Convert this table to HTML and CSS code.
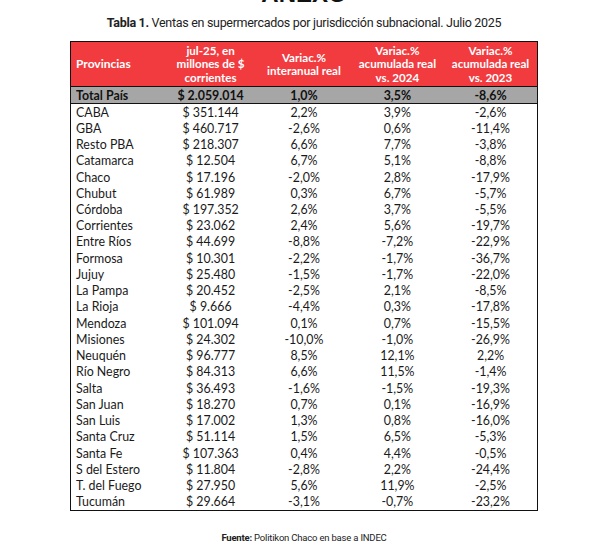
FILE: index.html
```html
<!DOCTYPE html>
<html lang="es">
<head>
<meta charset="utf-8">
<title>Anexo</title>
<link rel="stylesheet" href="styles.css">
</head>
<body>
<div class="page">
  <h1 class="anexo">ANEXO</h1>
  <p class="caption"><b>Tabla 1.</b> Ventas en supermercados por jurisdicción subnacional. Julio 2025</p>
  <table class="data">
    <colgroup><col><col><col><col><col></colgroup>
    <thead>
      <tr>
        <th class="left">Provincias</th>
        <th>jul-25, en<br>millones de $<br>corrientes</th>
        <th>Variac.%<br>interanual real</th>
        <th>Variac.%<br>acumulada real<br>vs. 2024</th>
        <th>Variac.%<br>acumulada real<br>vs. 2023</th>
      </tr>
    </thead>
    <tbody>
      <tr class="total"><td class="left">Total País</td><td>$ 2.059.014</td><td>1,0%</td><td>3,5%</td><td>-8,6%</td></tr>
      <tr><td class="left">CABA</td><td>$ 351.144</td><td>2,2%</td><td>3,9%</td><td>-2,6%</td></tr>
      <tr><td class="left">GBA</td><td>$ 460.717</td><td>-2,6%</td><td>0,6%</td><td>-11,4%</td></tr>
      <tr><td class="left">Resto PBA</td><td>$ 218.307</td><td>6,6%</td><td>7,7%</td><td>-3,8%</td></tr>
      <tr><td class="left">Catamarca</td><td>$ 12.504</td><td>6,7%</td><td>5,1%</td><td>-8,8%</td></tr>
      <tr><td class="left">Chaco</td><td>$ 17.196</td><td>-2,0%</td><td>2,8%</td><td>-17,9%</td></tr>
      <tr><td class="left">Chubut</td><td>$ 61.989</td><td>0,3%</td><td>6,7%</td><td>-5,7%</td></tr>
      <tr><td class="left">Córdoba</td><td>$ 197.352</td><td>2,6%</td><td>3,7%</td><td>-5,5%</td></tr>
      <tr><td class="left">Corrientes</td><td>$ 23.062</td><td>2,4%</td><td>5,6%</td><td>-19,7%</td></tr>
      <tr><td class="left">Entre Ríos</td><td>$ 44.699</td><td>-8,8%</td><td>-7,2%</td><td>-22,9%</td></tr>
      <tr><td class="left">Formosa</td><td>$ 10.301</td><td>-2,2%</td><td>-1,7%</td><td>-36,7%</td></tr>
      <tr><td class="left">Jujuy</td><td>$ 25.480</td><td>-1,5%</td><td>-1,7%</td><td>-22,0%</td></tr>
      <tr><td class="left">La Pampa</td><td>$ 20.452</td><td>-2,5%</td><td>2,1%</td><td>-8,5%</td></tr>
      <tr><td class="left">La Rioja</td><td>$ 9.666</td><td>-4,4%</td><td>0,3%</td><td>-17,8%</td></tr>
      <tr><td class="left">Mendoza</td><td>$ 101.094</td><td>0,1%</td><td>0,7%</td><td>-15,5%</td></tr>
      <tr><td class="left">Misiones</td><td>$ 24.302</td><td>-10,0%</td><td>-1,0%</td><td>-26,9%</td></tr>
      <tr><td class="left">Neuquén</td><td>$ 96.777</td><td>8,5%</td><td>12,1%</td><td>2,2%</td></tr>
      <tr><td class="left">Río Negro</td><td>$ 84.313</td><td>6,6%</td><td>11,5%</td><td>-1,4%</td></tr>
      <tr><td class="left">Salta</td><td>$ 36.493</td><td>-1,6%</td><td>-1,5%</td><td>-19,3%</td></tr>
      <tr><td class="left">San Juan</td><td>$ 18.270</td><td>0,7%</td><td>0,1%</td><td>-16,9%</td></tr>
      <tr><td class="left">San Luis</td><td>$ 17.002</td><td>1,3%</td><td>0,8%</td><td>-16,0%</td></tr>
      <tr><td class="left">Santa Cruz</td><td>$ 51.114</td><td>1,5%</td><td>6,5%</td><td>-5,3%</td></tr>
      <tr><td class="left">Santa Fe</td><td>$ 107.363</td><td>0,4%</td><td>4,4%</td><td>-0,5%</td></tr>
      <tr><td class="left">S del Estero</td><td>$ 11.804</td><td>-2,8%</td><td>2,2%</td><td>-24,4%</td></tr>
      <tr><td class="left">T. del Fuego</td><td>$ 27.950</td><td>5,6%</td><td>11,9%</td><td>-2,5%</td></tr>
      <tr><td class="left">Tucumán</td><td>$ 29.664</td><td>-3,1%</td><td>-0,7%</td><td>-23,2%</td></tr>
    </tbody>
  </table>
  <p class="source"><b>Fuente:</b> Politikon Chaco en base a INDEC</p>
</div>
</body>
</html>
```

FILE: styles.css
```css
html, body {
  margin: 0;
  padding: 0;
  background: #ffffff;
}

.page {
  width: 468px;
  padding-left: 70px;
  color: #1a1a1a;
  font-family: Lato, "Liberation Sans", sans-serif;
}

.anexo {
  margin: -17px 0 0 0;
  height: 21px;
  font-family: "Liberation Sans", Arial, sans-serif;
  font-size: 24px;
  line-height: 21px;
  font-weight: bold;
  text-align: center;
  color: #111;
}

.caption {
  margin: 0 0 11px 0;
  padding-top: 12px;
  font-family: Roboto, "Liberation Sans", sans-serif;
  font-size: 12.5px;
  line-height: 14px;
  letter-spacing: -0.3px;
  text-align: center;
  color: #222;
}

.caption b {
  font-weight: bold;
}

.data {
  width: 468px;
  table-layout: fixed;
  border-collapse: collapse;
  border: 1px solid #111;
  font-size: 12.4px;
}

.data th {
  background: #f23b3f;
  color: #ffffff;
  font-weight: bold;
  font-size: 11.6px;
  line-height: 13.5px;
  height: 44px;
  padding: 0 2px;
  text-align: center;
  vertical-align: middle;
}

.data th.left {
  text-align: left;
  padding-left: 5px;
  font-size: 12px;
}

.data td {
  height: 16.24px;
  line-height: 15px;
  padding: 0 2px;
  text-align: center;
  vertical-align: middle;
  white-space: nowrap;
}

.data td.left {
  text-align: left;
  padding-left: 5px;
}

.data tr.total td {
  background: #a6a6a6;
  font-weight: bold;
  color: #111;
  height: 16px;
  border-top: 1px solid #111;
  border-bottom: 1px solid #111;
}

.source {
  margin: 21px 0 0 0;
  text-align: center;
  font-family: Roboto, "Liberation Sans", sans-serif;
  font-size: 9.5px;
  letter-spacing: -0.2px;
  color: #222;
}
```
